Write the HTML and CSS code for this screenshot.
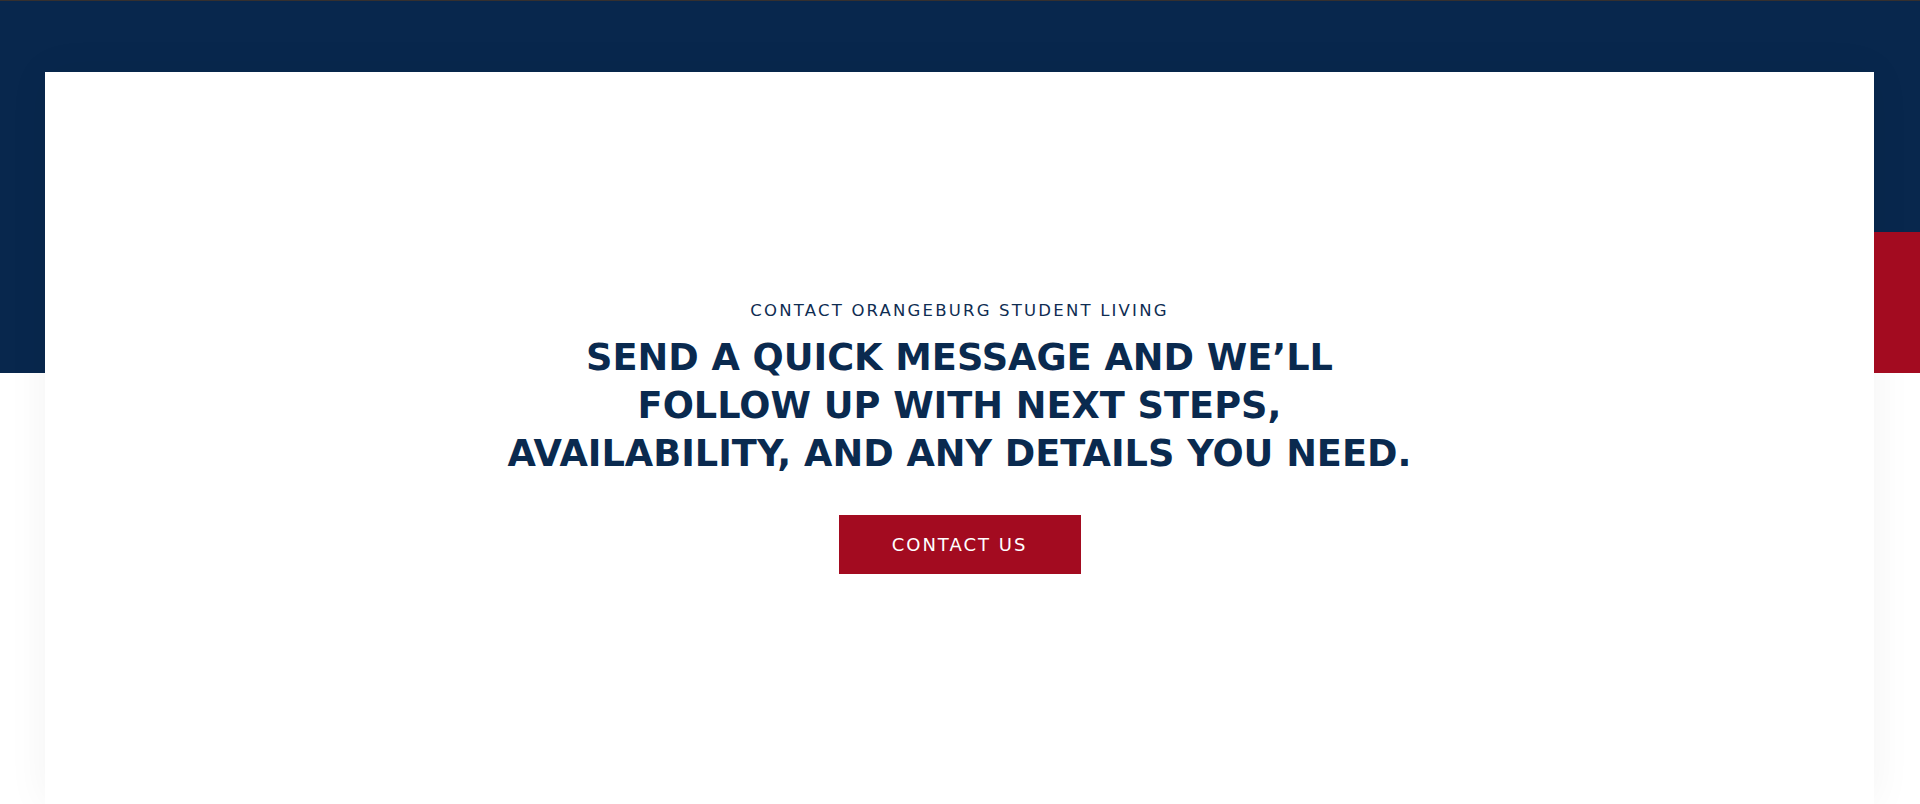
FILE: index.html
```html
<!DOCTYPE html>
<html lang="en">
<head>
<meta charset="utf-8">
<title>Contact Orangeburg Student Living</title>
<link rel="stylesheet" href="styles.css">
</head>
<body>
<section class="contact-section">
  <div class="contact-card">
    <p class="eyebrow">CONTACT ORANGEBURG STUDENT LIVING</p>
    <h2 class="headline">SEND A QUICK MESSAGE AND WE&rsquo;LL<br>FOLLOW UP WITH NEXT STEPS,<br>AVAILABILITY, AND ANY DETAILS YOU NEED.</h2>
    <a class="btn-contact" href="#">CONTACT US</a>
  </div>
</section>
</body>
</html>
```
FILE: styles.css
```css
* { box-sizing: border-box; }
html, body { margin: 0; padding: 0; background: #ffffff; }
body { font-family: "DejaVu Sans", "Liberation Sans", sans-serif; overflow: hidden; }

.contact-section {
  position: relative;
  height: 804px;
  display: flex;
  flex-direction: column;
  border-top: 1px solid #35302f;
  background: linear-gradient(#08274d 0, #08274d 372px, #ffffff 372px);
  padding: 71px 46px 0 45px;
}
.contact-section::after {
  content: "";
  position: absolute;
  right: 0;
  top: 231px;
  width: 46px;
  height: 141px;
  background: #a30b20;
}

.contact-card {
  flex: 1;
  background: #ffffff;
  box-shadow: 0 0 40px rgba(0, 0, 0, 0.05);
  padding-top: 229px;
  display: flex;
  flex-direction: column;
  align-items: center;
  text-align: center;
  color: #0a2a4f;
}

.eyebrow {
  margin: 0;
  font-size: 16.5px;
  line-height: 20px;
  font-weight: 400;
  letter-spacing: 2.2px;
  color: #0f2d52;
}

.headline {
  margin: 13px 0 0;
  font-size: 36.7px;
  line-height: 48px;
  font-weight: 700;
  letter-spacing: 0;
  color: #0a2a4f;
}

.btn-contact {
  margin-top: 37px;
  width: 242px;
  height: 59px;
  display: flex;
  align-items: center;
  justify-content: center;
  background: #a30b20;
  color: #ffffff;
  text-decoration: none;
  font-size: 18px;
  letter-spacing: 2px;
  font-weight: 400;
}
```
